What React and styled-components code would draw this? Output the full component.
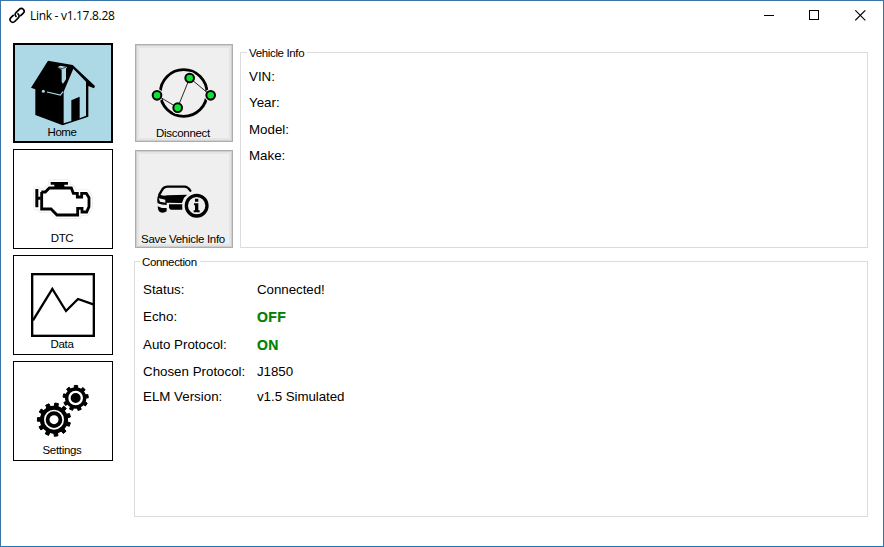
import React from "react";
import styled, { createGlobalStyle } from "styled-components";

const Global = createGlobalStyle`
  *, *::before, *::after { box-sizing: border-box; }
  html, body { margin: 0; background: #fff; }
  body { font-family: "Liberation Sans", Arial, sans-serif; color: #000; }
  button { font: inherit; color: inherit; }
`;

const Window = styled.div`
  display: flex;
  flex-direction: column;
  width: 884px;
  height: 547px;
  overflow: hidden;
  background: #fff;
  border: 1px solid #1f77bd;
  border-top-color: #3a74a9;
  border-left-color: #3a74a9;
`;

const TitleBar = styled.header`
  display: flex;
  align-items: center;
  height: 30px;
  padding-left: 7px;
`;

const Title = styled.h1`
  flex: 1;
  margin: 0 0 0 4px;
  font: 400 12px/16px "Open Sans", "Noto Sans", sans-serif;
  letter-spacing: -0.3px;
`;

const WindowButtons = styled.div`
  display: flex;
  height: 28px;
  margin-right: -1px;
`;

const WindowButton = styled.button`
  display: grid;
  place-items: center;
  width: ${(p) => p.$width || 45}px;
  height: 27px;
  padding: 0;
  border: 0;
  background: none;
`;

const Body = styled.main`
  display: flex;
  flex: 1;
  gap: 21px;
  padding: 12px 15px 29px 12px;
`;

const Sidebar = styled.nav`
  display: flex;
  flex-direction: column;
  gap: 6px;
`;

const NavTile = styled.button`
  display: flex;
  flex-direction: column;
  align-items: center;
  width: 100px;
  height: 100px;
  padding: 5px 0 0;
  border: 1px solid #000;
  background: ${(p) => (p.$active ? "#add8e6" : "#fff")};
  box-shadow: ${(p) => (p.$active ? "inset 0 0 0 1px #000" : "none")};
`;

const ActionButton = styled.button`
  display: flex;
  flex-direction: column;
  align-items: center;
  width: 98px;
  height: 98px;
  padding: 5px 0 0;
  border: 1px solid #adadad;
  background: #efefef;
  box-shadow: inset 0 0 0 1px #cfcfcf, inset 0 0 0 3px #e5e5e5;
`;

const TileIcon = styled.svg`
  display: block;
  flex: none;
  width: 90px;
  height: 77px;
`;

const TileLabel = styled.span`
  font-size: 11.5px;
  line-height: 13px;
  white-space: nowrap;
  letter-spacing: ${(p) => p.$spacing ?? -0.3}px;
  transform: translateX(-1px);
`;

const Content = styled.div`
  display: flex;
  flex: 1;
  flex-direction: column;
  gap: 7px;
`;

const TopRow = styled.div`
  display: flex;
  gap: 7px;
  height: 205px;
  padding-left: 1px;
`;

const Actions = styled.div`
  display: flex;
  flex-direction: column;
  gap: 8px;
  padding-top: 1px;
`;

const Group = styled.fieldset`
  flex: 1;
  min-width: 0;
  margin: ${(p) => p.$top || 0}px 0 0;
  padding: ${(p) => p.$pad}px 0 0 8px;
  border: 1px solid #dcdcdc;
`;

const Legend = styled.legend`
  height: 13px;
  margin-left: ${(p) => (p.$shift ? -3 : -2)}px;
  padding: 0 3px 0 2px;
  font-size: 11.5px;
  line-height: 15px;
  letter-spacing: -0.35px;
`;

const Field = styled.div`
  display: flex;
  height: ${(p) => p.$height}px;
  font-size: 13.33px;
  line-height: 16px;
  white-space: nowrap;
`;

const FieldName = styled.span`
  width: 114px;
`;

const FieldValue = styled.span`
  color: ${(p) => (p.$flag ? "#008000" : "#000")};
  font-size: ${(p) => (p.$flag ? "14px" : "inherit")};
  font-weight: ${(p) => (p.$flag ? 700 : 400)};
  letter-spacing: ${(p) => (p.$flag ? "0.4px" : "-0.05px")};
  -webkit-text-stroke: ${(p) => (p.$flag ? "0.2px #008000" : "0")};
`;

function gearPath(cx, cy, root, tip, teeth, turn) {
  const step = (Math.PI * 2) / teeth;
  const points = [];
  for (let i = 0; i < teeth; i++) {
    const a = i * step + turn;
    [[-0.24, root], [-0.19, tip], [0.19, tip], [0.24, root]].forEach(([k, r]) => {
      points.push(`${(cx + r * Math.cos(a + k * step)).toFixed(2)} ${(cy + r * Math.sin(a + k * step)).toFixed(2)}`);
    });
  }
  return `M${points.join("L")}Z`;
}

const HomeIcon = () => (
  <TileIcon viewBox="30 33 270 231">
    <path d="M120 68 L194 81 L261 144 L258 151 L241 144 L241 236 L164 262 L82 231 V154 L69 149Z" />
    <path d="M196 92 L234 131 V233 L215 241 V176 L190 187 V249 L167 256 V161Z" fill="#add8e6" />
    <path d="M148 88 L157 83 L178 87 L174 92 V124 L165 137 L161 132 V95Z" fill="#add8e6" />
    <path d="M149 89 L163 92 L175 87" fill="none" stroke="#000" strokeWidth="2" />
    <path d="M117 162 L157 171 L165 161" fill="none" stroke="#add8e6" strokeWidth="3.5" />
    <circle cx="106" cy="160" r="4.5" fill="#add8e6" />
  </TileIcon>
);

const EngineIcon = () => {
  const outline = "M100 141 H112 L124 129 H190 L196 145 H208 V156 H221 V145 H235 L243 158 V185 L236 201 H222 V190 H209 V210 H147 L129 192 H101 V141Z";
  return (
    <TileIcon viewBox="30 30 270 231">
      <g fill="none" strokeLinejoin="round" stroke="#eeeeee" strokeWidth="24">
        <path d={outline} />
        <path d="M132 115 H177 M87 136 V184" strokeLinecap="round" />
      </g>
      <g fill="none" strokeLinejoin="round" stroke="#fff" strokeWidth="18">
        <path d={outline} fill="#fff" />
        <path d="M132 115 H177 M87 136 V184" strokeLinecap="round" />
      </g>
      <path d={outline} fill="none" stroke="#000" strokeWidth="8.5" />
      <path d="M128 111 H180 V119 H169 V128 H139 V119 H128Z M82 132 H91 V155 H98 V164 H91 V187 H82Z" />
    </TileIcon>
  );
};

const ChartIcon = () => (
  <TileIcon viewBox="30 33 270 231">
    <rect x="72.5" y="72.5" width="185" height="185" fill="#fff" stroke="#000" strokeWidth="7" />
    <path d="M75 211 L133 117 L174 183 L210 147 L256 163" fill="none" stroke="#000" strokeWidth="7" />
  </TileIcon>
);

const GearsIcon = () => (
  <TileIcon viewBox="30 36 270 231">
    <g stroke="#000" strokeWidth="3" strokeLinejoin="round">
      <path d={gearPath(203, 129, 29, 38, 9, 0.55)} />
      <path d={gearPath(138, 194, 40, 50, 11, 0.3)} />
    </g>
    <circle cx="203" cy="129" r="32" />
    <circle cx="203" cy="129" r="18.5" fill="none" stroke="#fff" strokeWidth="7" />
    <circle cx="138" cy="194" r="42" />
    <circle cx="138" cy="194" r="27.5" fill="none" stroke="#fff" strokeWidth="5" />
    <circle cx="138" cy="194" r="13.5" fill="#fff" />
  </TileIcon>
);

const nodes = [[81, 172], [143, 209], [179, 120], [242, 172]];

const NetworkIcon = () => (
  <TileIcon viewBox="27 36 270 231">
    <circle cx="161" cy="165" r="70" fill="none" stroke="#000" strokeWidth="8.5" />
    {nodes.map(([x, y]) => (
      <circle key={x} cx={x} cy={y} r="19" fill="#efefef" />
    ))}
    <path d="M81 172 L143 209 L179 120 L242 172" fill="none" stroke="#000" strokeWidth="2.5" />
    {nodes.map(([x, y]) => (
      <circle key={x} cx={x} cy={y} r="13" fill="#0be530" stroke="#000" strokeWidth="6" />
    ))}
  </TileIcon>
);

const CarInfoIcon = () => (
  <TileIcon viewBox="27 33 270 231">
    <path d="M88 149 L98 132 Q103 125 113 125 H164 Q173 125 181 137" fill="none" stroke="#000" strokeWidth="7" strokeLinecap="round" />
    <path d="M87 148 Q98 154 112 151 L172 149 L162 158 L156 174 L110 173 V180 Q94 180 83 175 Q79 158 87 148Z" />
    <path d="M86 160 L106 164 V173 L90 170Z" fill="#efefef" />
    <path d="M83 184 L96 189 H110 V199 Q102 205 91 202 Q84 199 83 184Z M117 178 H157 V194 H122 L117 189Z" />
    <circle cx="200" cy="182" r="42" fill="#efefef" />
    <circle cx="200" cy="182" r="31" fill="#efefef" stroke="#000" strokeWidth="10" />
    <path d="M195 161 H205 V170 H195Z M192 175 H205 V196 H209 V202 H191 V196 H195 V181 H192Z" />
  </TileIcon>
);

const LinkIcon = () => (
  <svg width="18" height="18" viewBox="0 0 18 18" fill="none" stroke="#000" strokeWidth="1.65" strokeLinecap="round">
    <path d="M8 9.4 C6.7 7.9 7 6.6 8 5.6 L11.3 2.3 C12.5 1.2 14.2 1.2 15.3 2.3 C16.4 3.4 16.4 5 15.3 6.1 L12.7 8.7" />
    <path d="M10 6.9 C11.5 8.4 11.3 9.9 10.3 10.9 L6.7 14.5 C5.6 15.6 4 15.6 2.9 14.5 C1.8 13.4 1.8 11.8 2.9 10.7 L5.2 8.4" />
  </svg>
);

const navItems = [
  { label: "Home", Icon: HomeIcon, active: true, spacing: -0.45 },
  { label: "DTC", Icon: EngineIcon },
  { label: "Data", Icon: ChartIcon },
  { label: "Settings", Icon: GearsIcon },
];

const vehicle = [["VIN:", 26], ["Year:", 27], ["Model:", 26], ["Make:", 26]];

const connection = [
  { name: "Status:", value: "Connected!", height: 27 },
  { name: "Echo:", value: "OFF", flag: true, height: 28 },
  { name: "Auto Protocol:", value: "ON", flag: true, height: 27 },
  { name: "Chosen Protocol:", value: "J1850", height: 25 },
  { name: "ELM Version:", value: "v1.5 Simulated", height: 25 },
];

export default function App() {
  return (
    <>
      <Global />
      <Window>
        <TitleBar>
          <LinkIcon />
          <Title>Link - v1.17.8.28</Title>
          <WindowButtons>
            <WindowButton aria-label="Minimize">
              <svg width="11" height="11" shapeRendering="crispEdges"><path d="M0 5.5H10" stroke="#000" /></svg>
            </WindowButton>
            <WindowButton aria-label="Maximize">
              <svg width="11" height="11" shapeRendering="crispEdges"><path d="M.5 .5H9.5V9.5H.5Z" fill="none" stroke="#000" /></svg>
            </WindowButton>
            <WindowButton aria-label="Close" $width={47}>
              <svg width="11" height="11"><path d="M.3 .3L10.3 10.3M10.3 .3L.3 10.3" stroke="#000" strokeWidth="1.1" /></svg>
            </WindowButton>
          </WindowButtons>
        </TitleBar>
        <Body>
          <Sidebar>
            {navItems.map(({ label, Icon, active, spacing }) => (
              <NavTile key={label} $active={active}>
                <Icon />
                <TileLabel $spacing={spacing}>{label}</TileLabel>
              </NavTile>
            ))}
          </Sidebar>
          <Content>
            <TopRow>
              <Actions>
                <ActionButton>
                  <NetworkIcon />
                  <TileLabel>Disconnect</TileLabel>
                </ActionButton>
                <ActionButton>
                  <CarInfoIcon />
                  <TileLabel>Save Vehicle Info</TileLabel>
                </ActionButton>
              </Actions>
              <Group $top={3} $pad={10}>
                <Legend>Vehicle Info</Legend>
                {vehicle.map(([name, height]) => (
                  <Field key={name} $height={height}>
                    <FieldName>{name}</FieldName>
                  </Field>
                ))}
              </Group>
            </TopRow>
            <Group $pad={14}>
              <Legend $shift>Connection</Legend>
              {connection.map(({ name, value, flag, height }) => (
                <Field key={name} $height={height}>
                  <FieldName>{name}</FieldName>
                  <FieldValue $flag={flag}>{value}</FieldValue>
                </Field>
              ))}
            </Group>
          </Content>
        </Body>
      </Window>
    </>
  );
}
